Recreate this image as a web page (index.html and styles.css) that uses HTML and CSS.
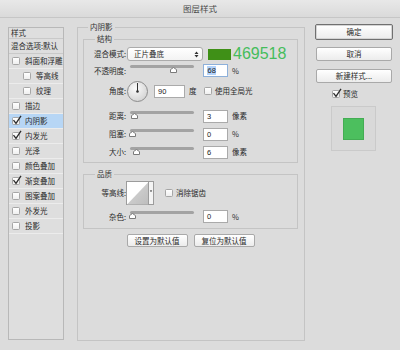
FILE: index.html
```html
<!DOCTYPE html>
<html lang="zh-CN">
<head>
<meta charset="utf-8">
<title>图层样式</title>
<link rel="stylesheet" href="styles.css">
</head>
<body>
<div class="titlebar">图层样式</div>
<div class="content">
  <div class="styles-list">
    <div class="row head">样式</div>
    <div class="row blend">混合选项:默认</div>
    <div class="row"><span class="cb"></span>斜面和浮雕</div>
    <div class="row sub"><span class="cb"></span>等高线</div>
    <div class="row sub"><span class="cb"></span>纹理</div>
    <div class="row"><span class="cb"></span>描边</div>
    <div class="row selected"><span class="cb"><svg class="tick" width="10" height="10" viewBox="0 0 10 10"><path d="M1.5 5.2 L4 8.3 L9 0.8" fill="none" stroke="#2b2b2b" stroke-width="1.3"/></svg></span>内阴影</div>
    <div class="row"><span class="cb"><svg class="tick" width="10" height="10" viewBox="0 0 10 10"><path d="M1.5 5.2 L4 8.3 L9 0.8" fill="none" stroke="#2b2b2b" stroke-width="1.3"/></svg></span>内发光</div>
    <div class="row"><span class="cb"></span>光泽</div>
    <div class="row"><span class="cb"></span>颜色叠加</div>
    <div class="row"><span class="cb"><svg class="tick" width="10" height="10" viewBox="0 0 10 10"><path d="M1.5 5.2 L4 8.3 L9 0.8" fill="none" stroke="#2b2b2b" stroke-width="1.3"/></svg></span>渐变叠加</div>
    <div class="row"><span class="cb"></span>图案叠加</div>
    <div class="row"><span class="cb"></span>外发光</div>
    <div class="row"><span class="cb"></span>投影</div>
  </div>

  <fieldset class="panel">
    <legend>内阴影</legend>
    <fieldset class="group structure">
      <legend>结构</legend>
      <div class="frow r1">
        <span class="lbl">混合模式:</span>
        <span class="select">正片叠底<svg class="arrows" width="5" height="7" viewBox="0 0 5 7"><path d="M0.5 3 L2.5 0.5 L4.5 3Z M0.5 4 L2.5 6.5 L4.5 4Z" fill="#333"/></svg></span>
        <span class="swatch"></span>
        <span class="hex">469518</span>
      </div>
      <div class="frow r2">
        <span class="lbl">不透明度:</span>
        <span class="slider"><span class="track"></span><svg class="thumb t-op" width="7" height="6" viewBox="0 0 7 6"><path d="M0.5 5.5 L0.5 2.6 L3.5 0.5 L6.5 2.6 L6.5 5.5Z" fill="#fff" stroke="#7a7a7a"/></svg></span>
        <span class="inp focus"><span class="sel">68</span></span>
        <span class="unit">%</span>
      </div>
      <div class="frow r3">
        <span class="lbl">角度:</span>
        <svg class="dial" width="21" height="21" viewBox="0 0 21 21"><defs><radialGradient id="dg" cx="40%" cy="35%" r="70%"><stop offset="0" stop-color="#fbfbfb"/><stop offset="1" stop-color="#d2d2d2"/></radialGradient></defs><circle cx="10.5" cy="10.5" r="10" fill="url(#dg)" stroke="#8c8c8c"/><line x1="10.5" y1="10.5" x2="10.5" y2="2" stroke="#333" stroke-width="1"/><circle cx="10.5" cy="10.5" r="1.3" fill="#333"/></svg>
        <span class="inp wide">90</span>
        <span class="unit deg">度</span>
        <span class="cb"></span>
        <span class="cbl">使用全局光</span>
      </div>
      <div class="frow r4">
        <span class="lbl">距离:</span>
        <span class="slider"><span class="track"></span><svg class="thumb t-min" width="7" height="6" viewBox="0 0 7 6"><path d="M0.5 5.5 L0.5 2.6 L3.5 0.5 L6.5 2.6 L6.5 5.5Z" fill="#fff" stroke="#7a7a7a"/></svg></span>
        <span class="inp">3</span>
        <span class="unit">像素</span>
      </div>
      <div class="frow r5">
        <span class="lbl">阻塞:</span>
        <span class="slider"><span class="track"></span><svg class="thumb t-zero" width="7" height="6" viewBox="0 0 7 6"><path d="M0.5 5.5 L0.5 2.6 L3.5 0.5 L6.5 2.6 L6.5 5.5Z" fill="#fff" stroke="#7a7a7a"/></svg></span>
        <span class="inp">0</span>
        <span class="unit">%</span>
      </div>
      <div class="frow r6">
        <span class="lbl">大小:</span>
        <span class="slider"><span class="track"></span><svg class="thumb t-size" width="7" height="6" viewBox="0 0 7 6"><path d="M0.5 5.5 L0.5 2.6 L3.5 0.5 L6.5 2.6 L6.5 5.5Z" fill="#fff" stroke="#7a7a7a"/></svg></span>
        <span class="inp">6</span>
        <span class="unit">像素</span>
      </div>
    </fieldset>

    <fieldset class="group quality">
      <legend>品质</legend>
      <div class="frow q1">
        <span class="lbl">等高线:</span>
        <svg class="contour" width="28" height="24" viewBox="0 0 28 24"><defs><linearGradient id="cg" x1="0" y1="0" x2="1" y2="1"><stop offset="0" stop-color="#d8d8d8"/><stop offset="1" stop-color="#bdbdbd"/></linearGradient></defs><rect x="0.5" y="0.5" width="22" height="23" fill="#fff" stroke="#9c9c9c"/><path d="M1 23.5 L22.5 1 L22.5 23.5Z" fill="url(#cg)"/><rect x="22.5" y="0.5" width="5" height="23" fill="#f4f4f4" stroke="#9c9c9c"/><path d="M23.8 9.5 L26.2 9.5 L25 11Z" fill="#222"/></svg>
        <span class="cb aa"></span>
        <span class="cbl">消除锯齿</span>
      </div>
      <div class="frow q2">
        <span class="lbl">杂色:</span>
        <span class="slider"><span class="track"></span><svg class="thumb t-zero" width="7" height="6" viewBox="0 0 7 6"><path d="M0.5 5.5 L0.5 2.6 L3.5 0.5 L6.5 2.6 L6.5 5.5Z" fill="#fff" stroke="#7a7a7a"/></svg></span>
        <span class="inp">0</span>
        <span class="unit">%</span>
      </div>
    </fieldset>

    <div class="defaults">
      <span class="btn small">设置为默认值</span>
      <span class="btn small">复位为默认值</span>
    </div>
  </fieldset>

  <div class="actions">
    <span class="btn big default">确定</span>
    <span class="btn big">取消</span>
    <span class="btn big">新建样式...</span>
    <div class="preview-check"><span class="cb"><svg class="tick" width="10" height="10" viewBox="0 0 10 10"><path d="M1.5 5.2 L4 8.3 L9 0.8" fill="none" stroke="#2b2b2b" stroke-width="1.3"/></svg></span><span class="cbl">预览</span></div>
    <div class="preview"><span class="preview-swatch"></span></div>
  </div>
</div>
</body>
</html>
```

FILE: styles.css
```css
* { box-sizing: border-box; }
html, body { margin: 0; padding: 0; }
body {
  width: 400px;
  height: 350px;
  overflow: hidden;
  background: #dcdcdc;
  font-family: "Noto Sans CJK SC", "Noto Sans", sans-serif;
  font-size: 7.5px;
  line-height: 10px;
  color: #2a2a2a;
}

.titlebar {
  height: 18px;
  line-height: 17px;
  text-align: center;
  font-size: 8.5px;
  color: #4a4a4a;
  background: linear-gradient(#e8e8e8, #dadada);
  border-bottom: 1px solid #c6c6c6;
}

.content {
  display: flex;
  align-items: flex-start;
  padding-left: 8px;
}

/* left list */
.styles-list {
  margin-top: 9px;
  width: 56px;
  height: 313px;
  border: 1px solid #b8b8b8;
  background: #dedede;
}
.row {
  display: flex;
  align-items: center;
  height: 15px;
  padding-left: 3px;
  border-bottom: 1px solid #ececec;
  white-space: nowrap;
}
.row.head { height: 11px; padding-left: 2px; border-bottom: 1px solid #c9c9c9; }
.row.blend { padding-left: 2px; border-bottom: 1px solid #c9c9c9; }
.row.sub { padding-left: 14px; }
.row.selected { background: #b7d6f5; }
.row .cb { margin-right: 5px; }

.cb {
  position: relative;
  flex: none;
  width: 8px;
  height: 8px;
  border: 1px solid #a6a6a6;
  border-radius: 1.5px;
  background: linear-gradient(#ffffff, #efefef);
}
.tick {
  position: absolute;
  left: -1px;
  top: -3px;
  overflow: visible;
}

/* middle panel */
fieldset {
  margin: 0;
  padding: 0;
  min-width: 0;
  border: 1px solid #c4c4c4;
}
legend {
  padding: 0 2px;
  line-height: 10px;
  font-size: 7.5px;
  color: #333;
}
.panel {
  margin-top: 4px;
  margin-left: 13px;
  width: 228px;
  height: 319px;
  padding: 2px 6px 0 5px;
}
.panel > legend { margin-left: 5px; }
.group > legend { margin-left: 11px; }
.structure { padding-bottom: 3px; }
.quality { margin-top: 6px; padding-bottom: 4px; }

.frow {
  display: flex;
  align-items: center;
  white-space: nowrap;
}
.r1 { margin-top: 3px; height: 14px; }
.r2 { margin-top: 2px; height: 15px; }
.r3 { margin-top: 2px; height: 22px; }
.r4 { margin-top: 7px; height: 14px; }
.r5 { margin-top: 4px; height: 14px; }
.r6 { margin-top: 4px; height: 14px; }
.q1 { margin-top: 2px; height: 24px; }
.q2 { margin-top: 4px; height: 15px; }

.lbl {
  flex: none;
  width: 42px;
  text-align: right;
}

.select {
  flex: none;
  display: flex;
  align-items: center;
  justify-content: space-between;
  margin-left: 1px;
  width: 76px;
  height: 14px;
  padding: 0 3px 0 6px;
  border: 1px solid #ababab;
  border-radius: 3px;
  background: linear-gradient(#ffffff, #f3f3f3);
}
.swatch {
  flex: none;
  margin-left: 5px;
  width: 23px;
  height: 11px;
  background: #3f9017;
}
.hex {
  margin-left: 2px;
  font-family: "Liberation Sans", Arial, sans-serif;
  font-size: 16px;
  line-height: 14px;
  color: #45bd5b;
}

.slider {
  position: relative;
  flex: none;
  margin-left: 4px;
  width: 64px;
  height: 10px;
  align-self: center;
  margin-top: -1px;
}
.track {
  display: block;
  height: 3px;
  border-radius: 2px;
  background: #a3a3a3;
}
.thumb {
  position: absolute;
  top: 2px;
}
.t-op { left: 40px; }
.t-min { left: 1px; }
.t-zero { left: -1px; }
.t-size { left: 3px; }

.inp {
  flex: none;
  margin-left: 9px;
  width: 25px;
  height: 13px;
  padding-left: 3px;
  border: 1px solid #aaaaaa;
  background: #fff;
  font-family: "Liberation Sans", Arial, sans-serif;
  font-size: 7.5px;
  line-height: 11px;
  color: #222;
}
.inp.focus { border-color: #8db0da; }
.inp .sel { background: #b3d3fb; padding: 0 0.5px; }
.inp.wide { margin-left: 6px; width: 31px; }
.unit { margin-left: 4px; }
.unit.deg { width: 8px; flex: none; }

.dial { flex: none; margin-left: 1px; }
.r3 .cb { margin-left: 7px; }
.cbl { margin-left: 3px; }

.contour { flex: none; }
.cb.aa { margin-left: 11px; }

.defaults {
  display: flex;
  justify-content: center;
  gap: 6px;
  margin-top: 5px;
}

.btn {
  display: block;
  text-align: center;
  border: 1px solid #a9a9a9;
  border-radius: 2px;
  background: linear-gradient(#ffffff, #ececec);
  white-space: nowrap;
}
.btn.small { width: 61px; height: 13px; line-height: 11px; }

/* right column */
.actions {
  margin-left: 10px;
  margin-top: 6px;
  width: 78px;
  display: flex;
  flex-direction: column;
}
.btn.big { height: 14px; line-height: 12px; margin-top: 8px; margin-left: 1px; width: 76px; }
.btn.default {
  margin-top: 0;
  margin-left: 0;
  width: 78px;
  height: 16px;
  line-height: 14px;
  border-color: #707070;
  box-shadow: inset 0 0 0 1px #d4d4d4;
}
.btn.big:nth-child(2) { margin-top: 7px; }
.preview-check {
  display: flex;
  align-items: center;
  margin-top: 7px;
  margin-left: 17px;
  height: 8px;
}
.preview {
  display: flex;
  align-items: center;
  justify-content: center;
  margin-top: 8px;
  margin-left: 16px;
  width: 45px;
  height: 45px;
  border: 1px solid #cacaca;
  background: #d9d9d9;
}
.preview-swatch {
  width: 21px;
  height: 22px;
  background: #4cbf5e;
  border: 1px solid #43ad53;
}
```
